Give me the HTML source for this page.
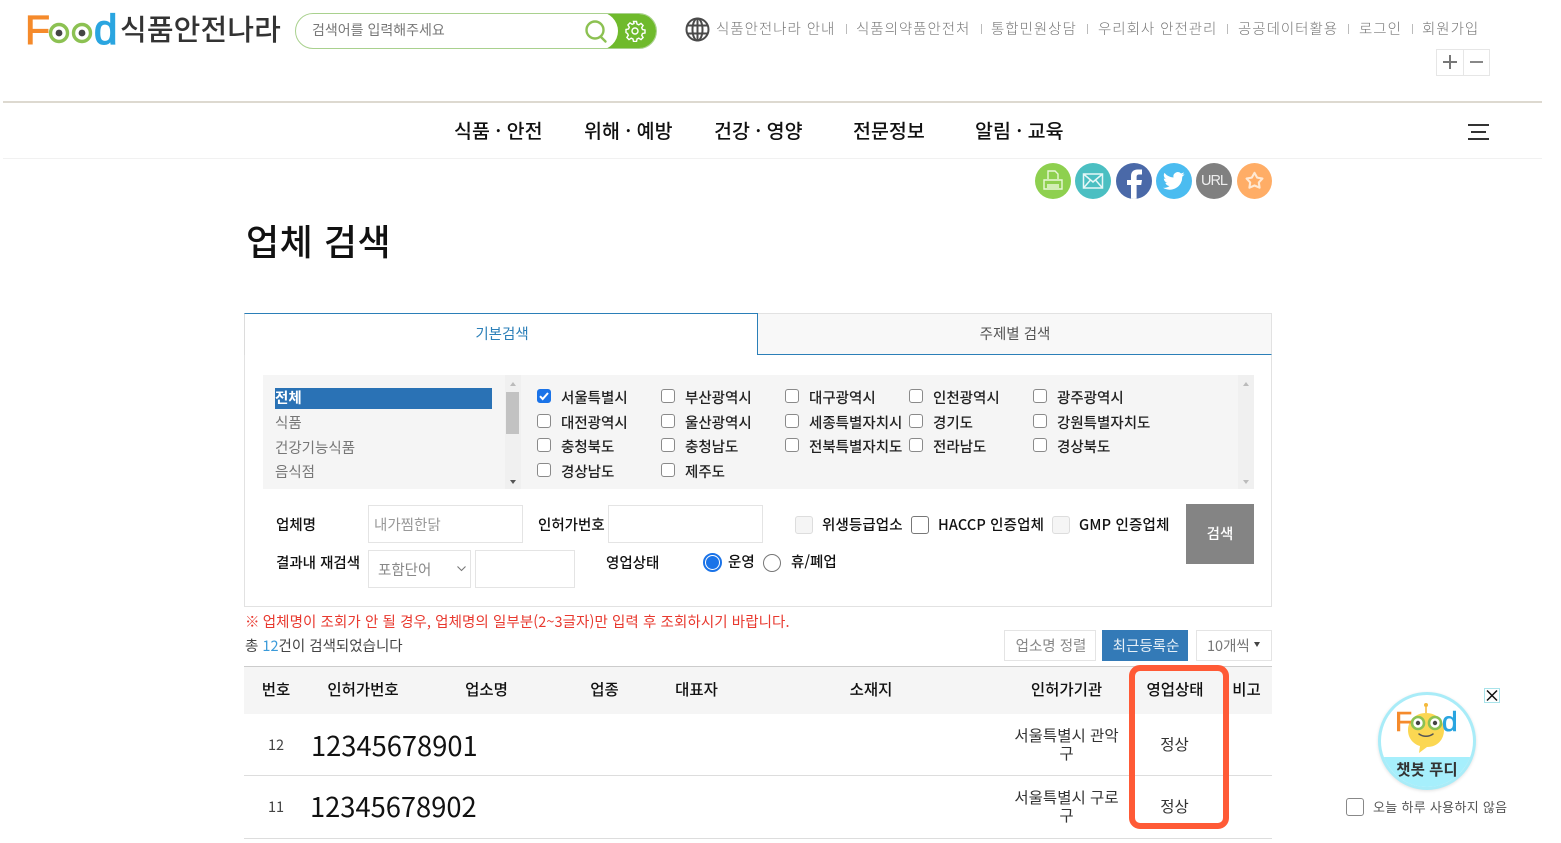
<!DOCTYPE html>
<html lang="ko"><head><meta charset="utf-8"><title>업체 검색</title>
<style>
*{box-sizing:border-box}
html,body{margin:0;padding:0;background:#fff}
body{position:relative;width:1561px;height:843px;overflow:hidden;font-family:"Noto Sans CJK KR","Liberation Sans",sans-serif;color:#222}
.a{position:absolute}
.t{position:absolute;white-space:nowrap;line-height:20px;height:20px}
.c{transform:translateX(-50%);text-align:center}
.top{font-size:14.5px;color:#777;letter-spacing:.95px;top:19px;font-weight:300}
.sep{position:absolute;top:24px;width:1px;height:10px;background:#bbb}
.nav{font-size:19.5px;color:#111;top:120px;font-weight:500;line-height:20px}
.sel{font-size:14.5px;color:#777;left:275px}
.cb{position:absolute;width:14px;height:14px;border:1px solid #8a8a8a;border-radius:3px;background:#fff}
.lb{font-size:14.5px;color:#222;font-weight:500}
.f{font-size:14.5px;color:#111;font-weight:500}
.in{position:absolute;border:1px solid #e4e4e4;background:#fff}
.th{font-size:15.5px;color:#111;font-weight:500;top:679px}
.td{font-size:15.5px;color:#333}
.big{font-size:27.3px;color:#111;line-height:36px;height:36px}
.line{position:absolute;left:244px;width:1028px;height:1px;background:#ddd}
</style></head><body>

<!-- logo -->
<svg class="a" style="left:24px;top:8px" width="100" height="42" viewBox="0 0 100 42">
<text x="1" y="36" font-family="Liberation Sans" font-size="41" stroke="#f58a2b" stroke-width="1" fill="#f58a2b">F</text>
<circle cx="35" cy="25" r="8.500" fill="#fff" stroke="#8cc152" stroke-width="3.400"/><circle cx="35" cy="25" r="3.400" fill="#444"/>
<circle cx="58" cy="25" r="8.500" fill="#fff" stroke="#8cc152" stroke-width="3.400"/><circle cx="58" cy="25" r="3.400" fill="#444"/>
<text x="70" y="36" font-family="Liberation Sans" font-size="42" stroke="#2aa5e0" stroke-width="1.300" fill="#2aa5e0">d</text>
</svg>
<div class="t" style="left:120px;top:18px;font-size:29px;color:#333;font-weight:500;letter-spacing:.15px">식품안전나라</div>

<!-- search -->
<div class="a" style="left:295px;top:13px;width:362px;height:36px;border:1px solid #a9d18e;border-radius:18px;background:#fff;overflow:hidden">
<div class="a" style="left:307px;top:-1px;width:55px;height:36px;background:#6fba2c"></div>
<div class="a" style="left:284px;top:-2px;width:38px;height:38px;border-radius:19px;background:#fff"></div>
</div>
<div class="t" style="left:312px;top:20px;font-size:14px;color:#777">검색어를 입력해주세요</div>
<svg class="a" style="left:583px;top:17px" width="26" height="28" viewBox="0 0 26 28" fill="none" stroke="#8cc152" stroke-width="2.400"><circle cx="12" cy="13" r="8.500"/><path d="M18 20l4.500 4.500" stroke-linecap="round"/></svg>
<svg class="a" style="left:624px;top:20px" width="22" height="22" viewBox="0 0 22 22" fill="none" stroke="#fff" stroke-width="1.400"><circle cx="11" cy="11" r="3"/><path d="M9.500 2h3l.5 2.500 1.800.8 2.200-1.400 2.100 2.100-1.400 2.200.8 1.800 2.500.5v3l-2.500.5-.8 1.800 1.400 2.200-2.100 2.100-2.200-1.400-1.800.8-.5 2.500h-3l-.5-2.500-1.800-.8-2.200 1.400-2.100-2.100 1.400-2.200-.8-1.800L2 13v-3l2.500-.5.8-1.800-1.400-2.200L6 3.400l2.200 1.400 1.800-.8z" transform="translate(0 -.5)"/></svg>

<!-- globe -->
<svg class="a" style="left:685px;top:17px" width="25" height="25" viewBox="0 0 25 25" fill="none" stroke="#4a4a4a" stroke-width="2"><circle cx="12.500" cy="12.500" r="11"/><ellipse cx="12.500" cy="12.500" rx="5" ry="11"/><path d="M2 8.500h21M2 16.500h21M12.500 1.500v22"/></svg>

<!-- top links -->
<div class="t top" style="left:716px">식품안전나라 안내</div><div class="sep" style="left:846px"></div>
<div class="t top" style="left:856px">식품의약품안전처</div><div class="sep" style="left:981px"></div>
<div class="t top" style="left:991px">통합민원상담</div><div class="sep" style="left:1087px"></div>
<div class="t top" style="left:1098px">우리회사 안전관리</div><div class="sep" style="left:1227px"></div>
<div class="t top" style="left:1238px">공공데이터활용</div><div class="sep" style="left:1348px"></div>
<div class="t top" style="left:1359px">로그인</div><div class="sep" style="left:1412px"></div>
<div class="t top" style="left:1422px">회원가입</div>

<!-- zoom buttons -->
<div class="a" style="left:1436px;top:49px;width:54px;height:27px;border:1px solid #e6e6e6"></div>
<div class="a" style="left:1463px;top:49px;width:1px;height:27px;background:#e6e6e6"></div>
<div class="a" style="left:1443px;top:61px;width:14px;height:2px;background:#777"></div>
<div class="a" style="left:1449px;top:55px;width:2px;height:14px;background:#777"></div>
<div class="a" style="left:1470px;top:61px;width:13px;height:2px;background:#888"></div>

<!-- nav -->
<div class="a" style="left:3px;top:101px;width:1539px;height:2px;background:#ddd9d0"></div>
<div class="a" style="left:3px;top:158px;width:1539px;height:1px;background:#f1f1f1"></div>
<div class="t nav" style="left:454px">식품 · 안전</div>
<div class="t nav" style="left:584px">위해 · 예방</div>
<div class="t nav" style="left:714px">건강 · 영양</div>
<div class="t nav" style="left:853px">전문정보</div>
<div class="t nav" style="left:975px">알림 · 교육</div>
<div class="a" style="left:1468px;top:124px;width:21px;height:2px;background:#333"></div>
<div class="a" style="left:1471px;top:131px;width:15px;height:2px;background:#333"></div>
<div class="a" style="left:1468px;top:138px;width:21px;height:2px;background:#333"></div>

<!-- social -->
<div class="a" style="left:1035px;top:163px;width:36px;height:36px;border-radius:50%;background:#8ed04f"></div>
<svg class="a" style="left:1041px;top:169px" width="24" height="24" viewBox="0 0 24 24" fill="none" stroke="#e9f7d8" stroke-width="1.400"><path d="M7 10V2h7l3 3v5M3 11h18v9H3zM6 16h12M6 18h12"/></svg>
<div class="a" style="left:1075px;top:163px;width:36px;height:36px;border-radius:50%;background:#4bbfc2"></div>
<svg class="a" style="left:1082px;top:172px" width="22" height="18" viewBox="0 0 22 18" fill="none" stroke="#e6f7f7" stroke-width="1.500"><path d="M1.500 2h19v14h-19zM1.500 2l9.500 8 9.500-8M1.500 16l7-8M20.500 16l-7-8"/></svg>
<div class="a" style="left:1116px;top:163px;width:36px;height:36px;border-radius:50%;background:#4a69a8;overflow:hidden">
<svg class="a" style="left:0;top:0" width="36" height="36" viewBox="0 0 36 36"><path d="M15 36V22h-4v-5h4v-4c0-4 2.500-6.500 6.500-6.500H26v5h-3c-1.600 0-2.400.8-2.400 2.300V17H26l-.8 5h-4.600v14z" fill="#fff"/></svg></div>
<div class="a" style="left:1156px;top:163px;width:36px;height:36px;border-radius:50%;background:#4bbcf0"></div>
<svg class="a" style="left:1163px;top:171px" width="22" height="20" viewBox="0 0 24 20"><path d="M23.500 2.500c-.9.400-1.800.7-2.800.8 1-.6 1.800-1.500 2.100-2.700-.9.600-2 1-3.100 1.200A4.800 4.800 0 0 0 11.500 6.200 13.700 13.700 0 0 1 1.600 1.200a4.800 4.800 0 0 0 1.500 6.500c-.8 0-1.500-.2-2.200-.6 0 2.400 1.700 4.400 3.900 4.800-.7.200-1.400.2-2.200.1.600 1.900 2.400 3.300 4.500 3.400A9.700 9.700 0 0 1 0 17.400 13.700 13.700 0 0 0 21 5.300c.9-.7 1.800-1.600 2.500-2.800z" fill="#fff"/></svg>
<div class="a" style="left:1196px;top:163px;width:36px;height:36px;border-radius:50%;background:#808080"></div>
<div class="t c" style="left:1214px;top:171px;font-size:14.500px;color:#eee;font-family:'Liberation Sans',sans-serif;letter-spacing:-1px">URL</div>
<div class="a" style="left:1237px;top:163px;width:35px;height:36px;border-radius:50%;background:#ffad66"></div>
<svg class="a" style="left:1243px;top:169px" width="23" height="23" viewBox="0 0 24 24" fill="none" stroke="#ffe9d4" stroke-width="2.200" stroke-linejoin="round"><path d="M12 4l2.800 5 5.500 1-3.800 4 .8 5.500L12 17.200l-5.300 2.300.8-5.500-3.800-4 5.500-1z"/></svg>

<!-- title -->
<div class="t" style="left:246px;top:220px;height:40px;line-height:40px;font-size:36px;font-weight:500;color:#111;letter-spacing:.5px">업체 검색</div>

<!-- panel + tabs -->
<div class="a" style="left:244px;top:354px;width:1028px;height:253px;border:1px solid #e2e2e2;border-top:0"></div>
<div class="a" style="left:757px;top:313px;width:515px;height:42px;background:#f8f8f8;border:1px solid #e2e2e2;border-bottom:1px solid #2b7fb8;border-left:1px solid #2b7fb8"></div>
<div class="a" style="left:244px;top:313px;width:514px;height:42px;background:#fff;border:1px solid #dcdcdc;border-top:1px solid #2b7fb8;border-right:1px solid #2b7fb8;border-bottom:0"></div>
<div class="t c" style="left:502px;top:324px;font-size:14.5px;color:#2b7fb8">기본검색</div>
<div class="t c" style="left:1015px;top:324px;font-size:14.5px;color:#555">주제별 검색</div>

<!-- list area -->
<div class="a" style="left:263px;top:375px;width:991px;height:114px;background:#f5f5f5"></div>
<div class="a" style="left:505px;top:375px;width:16px;height:114px;background:#f0f0f0"></div>
<div class="a" style="left:506px;top:392px;width:13px;height:42px;background:#c2c2c2"></div>
<div class="a" style="left:510px;top:382px;border:3.500px solid transparent;border-bottom:4px solid #bbb;border-top:0"></div>
<div class="a" style="left:510px;top:480px;border:3.500px solid transparent;border-top:4px solid #555;border-bottom:0"></div>
<div class="a" style="left:1238px;top:375px;width:16px;height:114px;background:#f0f0f0"></div>
<div class="a" style="left:1243px;top:382px;border:3.500px solid transparent;border-bottom:4px solid #bbb;border-top:0"></div>
<div class="a" style="left:1243px;top:480px;border:3.500px solid transparent;border-top:4px solid #bbb;border-bottom:0"></div>
<div class="a" style="left:275px;top:388px;width:217px;height:21px;background:#2a72b5"></div>
<div class="t sel" style="top:388px;color:#fff;font-weight:700">전체</div>
<div class="t sel" style="top:413px">식품</div>
<div class="t sel" style="top:438px">건강기능식품</div>
<div class="t sel" style="top:462px">음식점</div>

<!-- region checks -->
<div class="cb" style="left:537px;top:389px;background:#1a73e8;border-color:#1a73e8"></div>
<svg class="a" style="left:537px;top:389px" width="14" height="14" viewBox="0 0 14 14" fill="none" stroke="#fff" stroke-width="2"><path d="M3 7.200l2.700 2.800L11 4"/></svg>
<div class="cb" style="left:661px;top:389px"></div><div class="cb" style="left:785px;top:389px"></div><div class="cb" style="left:909px;top:389px"></div><div class="cb" style="left:1033px;top:389px"></div>
<div class="cb" style="left:537px;top:414px"></div><div class="cb" style="left:661px;top:414px"></div><div class="cb" style="left:785px;top:414px"></div><div class="cb" style="left:909px;top:414px"></div><div class="cb" style="left:1033px;top:414px"></div>
<div class="cb" style="left:537px;top:438px"></div><div class="cb" style="left:661px;top:438px"></div><div class="cb" style="left:785px;top:438px"></div><div class="cb" style="left:909px;top:438px"></div><div class="cb" style="left:1033px;top:438px"></div>
<div class="cb" style="left:537px;top:463px"></div><div class="cb" style="left:661px;top:463px"></div>
<div class="t lb" style="left:561px;top:388px">서울특별시</div><div class="t lb" style="left:685px;top:388px">부산광역시</div><div class="t lb" style="left:809px;top:388px">대구광역시</div><div class="t lb" style="left:933px;top:388px">인천광역시</div><div class="t lb" style="left:1057px;top:388px">광주광역시</div>
<div class="t lb" style="left:561px;top:413px">대전광역시</div><div class="t lb" style="left:685px;top:413px">울산광역시</div><div class="t lb" style="left:809px;top:413px">세종특별자치시</div><div class="t lb" style="left:933px;top:413px">경기도</div><div class="t lb" style="left:1057px;top:413px">강원특별자치도</div>
<div class="t lb" style="left:561px;top:437px">충청북도</div><div class="t lb" style="left:685px;top:437px">충청남도</div><div class="t lb" style="left:809px;top:437px">전북특별자치도</div><div class="t lb" style="left:933px;top:437px">전라남도</div><div class="t lb" style="left:1057px;top:437px">경상북도</div>
<div class="t lb" style="left:561px;top:462px">경상남도</div><div class="t lb" style="left:685px;top:462px">제주도</div>

<!-- form -->
<div class="t f" style="left:276px;top:515px">업체명</div>
<div class="in" style="left:368px;top:505px;width:155px;height:38px"></div>
<div class="t" style="left:374px;top:515px;font-size:14.5px;color:#999">내가찜한닭</div>
<div class="t f" style="left:538px;top:515px">인허가번호</div>
<div class="in" style="left:608px;top:505px;width:155px;height:38px"></div>
<div class="a" style="left:795px;top:516px;width:18px;height:18px;border:1px solid #ddd;border-radius:3px;background:#f5f5f5"></div>
<div class="t f" style="left:822px;top:515px;letter-spacing:.1px">위생등급업소</div>
<div class="a" style="left:911px;top:516px;width:18px;height:18px;border:1px solid #777;border-radius:3px;background:#fff"></div>
<div class="t f" style="left:938px;top:515px;letter-spacing:.15px">HACCP 인증업체</div>
<div class="a" style="left:1052px;top:516px;width:18px;height:18px;border:1px solid #ddd;border-radius:3px;background:#f5f5f5"></div>
<div class="t f" style="left:1079px;top:515px;letter-spacing:.2px">GMP 인증업체</div>
<div class="a" style="left:1186px;top:504px;width:68px;height:60px;background:#848484"></div>
<div class="t c" style="left:1220px;top:524px;font-size:14.5px;color:#fff;font-weight:500">검색</div>
<div class="t f" style="left:276px;top:553px">결과내 재검색</div>
<div class="in" style="left:368px;top:550px;width:103px;height:38px"></div>
<div class="t" style="left:378px;top:560px;font-size:14.5px;color:#888">포함단어</div>
<svg class="a" style="left:456px;top:565px" width="11" height="8" viewBox="0 0 11 8" fill="none" stroke="#777" stroke-width="1.100"><path d="M1.500 1.500l4 4 4-4"/></svg>
<div class="in" style="left:475px;top:550px;width:100px;height:38px"></div>
<div class="t f" style="left:606px;top:553px">영업상태</div>
<div class="a" style="left:703px;top:553px;width:19px;height:19px;border-radius:50%;border:2px solid #1a73e8;background:#fff"></div>
<div class="a" style="left:706px;top:556px;width:13px;height:13px;border-radius:50%;background:#1a73e8"></div>
<div class="t f" style="left:728px;top:552px">운영</div>
<div class="a" style="left:763px;top:554px;width:18px;height:18px;border-radius:50%;border:1px solid #777;background:#fff"></div>
<div class="t f" style="left:791px;top:552px">휴/폐업</div>

<!-- notices -->
<div class="t" style="left:245px;top:612px;font-size:14.5px;color:#e8392f;letter-spacing:.08px"><span style="margin-right:-1px">※</span> 업체명이 조회가 안 될 경우, 업체명의 일부분(2~3글자)만 입력 후 조회하시기 바랍니다.</div>
<div class="t" style="left:245px;top:636px;font-size:14.5px;color:#444">총 <span style="color:#3a9ad9">12</span>건이 검색되었습니다</div>

<!-- sort buttons -->
<div class="a" style="left:1004px;top:630px;width:92px;height:31px;border:1px solid #e4e4e4"></div>
<div class="t c" style="left:1051px;top:636px;font-size:14.5px;color:#888">업소명 정렬</div>
<div class="a" style="left:1102px;top:630px;width:86px;height:31px;background:#337ab7"></div>
<div class="t c" style="left:1146px;top:636px;font-size:14.5px;color:#e8f1f8">최근등록순</div>
<div class="a" style="left:1196px;top:630px;width:76px;height:31px;border:1px solid #e4e4e4"></div>
<div class="t" style="left:1207px;top:636px;font-size:14.5px;color:#777">10개씩</div>
<div class="a" style="left:1254px;top:642px;border:3px solid transparent;border-top:5px solid #444;border-bottom:0"></div>

<!-- table -->
<div class="a" style="left:244px;top:666px;width:1028px;height:48px;background:#f5f5f5;border-top:1px solid #ccc"></div>
<div class="t th c" style="left:276px">번호</div>
<div class="t th c" style="left:363px">인허가번호</div>
<div class="t th c" style="left:486.500px">업소명</div>
<div class="t th c" style="left:604.500px">업종</div>
<div class="t th c" style="left:696.500px">대표자</div>
<div class="t th c" style="left:871px">소재지</div>
<div class="t th c" style="left:1066.500px">인허가기관</div>
<div class="t th c" style="left:1175px">영업상태</div>
<div class="t th c" style="left:1246.500px">비고</div>
<div class="line" style="top:775px"></div>
<div class="line" style="top:838px"></div>

<div class="t td c" style="left:276px;top:735px;font-size:14.5px;color:#444">12</div>
<div class="t big" style="left:311px;top:726px">12345678901</div>
<div class="t td c" style="left:1066.500px;top:725px">서울특별시 관악</div>
<div class="t td c" style="left:1066.500px;top:743px">구</div>
<div class="t td c" style="left:1174.500px;top:734px">정상</div>

<div class="t td c" style="left:276px;top:797px;font-size:14.5px;color:#444">11</div>
<div class="t big" style="left:310px;top:787px">12345678902</div>
<div class="t td c" style="left:1066.500px;top:787px">서울특별시 구로</div>
<div class="t td c" style="left:1066.500px;top:805px">구</div>
<div class="t td c" style="left:1174.500px;top:796px">정상</div>

<!-- highlight -->
<div class="a" style="left:1129px;top:665px;width:100px;height:164px;border:6px solid #ff5a36;border-radius:11px"></div>

<!-- chatbot -->
<div class="a" style="left:1378px;top:692px;width:98px;height:98px;border-radius:50%;background:#fff;border:3px solid #a9ecf8;overflow:hidden;box-shadow:0 1px 3px rgba(0,0,0,.12)">
<div class="a" style="left:0;top:62px;width:100%;height:40px;background:#a6effc"></div>
</div>
<svg class="a" style="left:1390px;top:700px" width="76" height="56" viewBox="0 0 76 56">
<circle cx="36" cy="5" r="2" fill="#f4b93a"/><path d="M36 7v6" stroke="#f4b93a" stroke-width="1.500"/>
<path d="M36 13c-11 0-18 8-18 17 0 8 5 14 12 16l-1 7 8-6c11 0 17-8 17-17 0-9-7-17-18-17z" fill="#fbd752"/>
<text x="5" y="31" font-family="Liberation Sans" font-size="28" fill="#f58a2b" stroke="#f58a2b" stroke-width=".6">F</text>
<circle cx="28" cy="23" r="6" fill="#fff" stroke="#8cc152" stroke-width="2.600"/><circle cx="28" cy="23" r="2.200" fill="#444"/>
<circle cx="45" cy="23" r="6" fill="#fff" stroke="#8cc152" stroke-width="2.600"/><circle cx="45" cy="23" r="2.200" fill="#444"/>
<path d="M29 34c4 3 10 3 14 0" fill="none" stroke="#555" stroke-width="1.500" stroke-linecap="round"/>
<text x="52" y="31" font-family="Liberation Sans" font-size="28" fill="#2aa5e0" stroke="#2aa5e0" stroke-width=".6">d</text>
</svg>
<div class="t c" style="left:1427px;top:759px;font-size:15.500px;font-weight:700;color:#333">챗봇 푸디</div>
<div class="a" style="left:1484px;top:688px;width:16px;height:15px;border:1px solid #a9e3ea;background:#fff"></div>
<svg class="a" style="left:1484px;top:688px" width="16" height="15" viewBox="0 0 16 15" stroke="#111" stroke-width="1.500"><path d="M3 2.500l10 10M13 2.500l-10 10"/></svg>
<div class="a" style="left:1346px;top:798px;width:18px;height:18px;border:1px solid #888;border-radius:3px;background:#fff"></div>
<div class="t" style="left:1373px;top:797px;font-size:13px;color:#555;letter-spacing:.3px">오늘 하루 사용하지 않음</div>
</body></html>
